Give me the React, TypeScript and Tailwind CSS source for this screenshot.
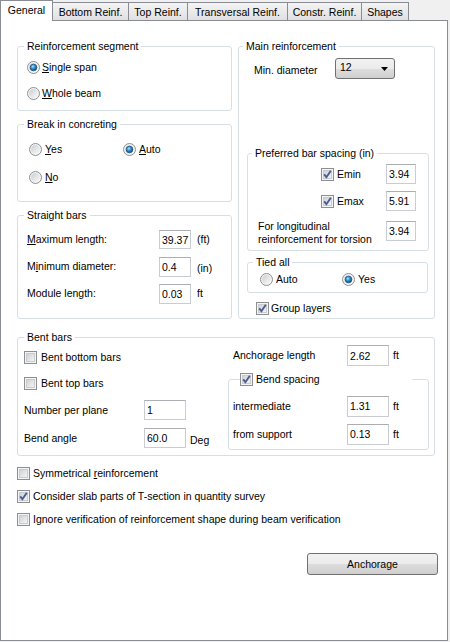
import React from "react";

// Win7-style radio button
function Radio({ checked }: { checked?: boolean }) {
  return (
    <svg width="13" height="13" viewBox="0 0 13 13" className="shrink-0">
      <defs>
        <linearGradient id="rbg" x1="0" y1="0" x2="1" y2="1">
          <stop offset="0" stopColor="#cbcdd0" />
          <stop offset="1" stopColor="#fbfbfb" />
        </linearGradient>
        <radialGradient id="rdot" cx="0.4" cy="0.35" r="0.75">
          <stop offset="0" stopColor="#a6e3fb" />
          <stop offset="0.45" stopColor="#2d8ccb" />
          <stop offset="1" stopColor="#0d3b6a" />
        </radialGradient>
      </defs>
      <circle cx="6.5" cy="6.5" r="6" fill="#f4f4f4" stroke="#8e8f8f" />
      <circle cx="6.5" cy="6.5" r="4.5" fill="url(#rbg)" />
      {checked && (
        <circle cx="6.5" cy="6.5" r="3.3" fill="url(#rdot)" stroke="#1a4f7e" strokeWidth="0.8" />
      )}
    </svg>
  );
}

// Win7-style checkbox
function Check({ checked }: { checked?: boolean }) {
  return (
    <svg width="13" height="13" viewBox="0 0 13 13" className="shrink-0">
      <defs>
        <linearGradient id="cbg" x1="0" y1="0" x2="1" y2="1">
          <stop offset="0" stopColor="#cbcfd5" />
          <stop offset="1" stopColor="#f7f7f7" />
        </linearGradient>
      </defs>
      <rect x="0.5" y="0.5" width="12" height="12" fill="#f4f4f4" stroke="#8e8f8f" />
      <rect x="2.5" y="2.5" width="8" height="8" fill="url(#cbg)" stroke="#c9cbce" />
      {checked && (
        <path d="M3.2 6.4 L5.4 9.2 L9.8 2.8" fill="none" stroke="#4a5c93" strokeWidth="1.9" />
      )}
    </svg>
  );
}

function Group({
  title,
  className,
  legendClass,
  children,
}: {
  title: React.ReactNode;
  className: string;
  legendClass: string;
  children?: React.ReactNode;
}) {
  return (
    <fieldset className={"rounded-[3px] border border-[#d5dfe5] " + className}>
      <legend className={"px-[3px] leading-[13px] " + legendClass}>{title}</legend>
      {children}
    </fieldset>
  );
}

function Field({ value, className }: { value: string; className: string }) {
  return (
    <input
      readOnly
      value={value}
      className={
        "border border-[#c9ccd3] border-t-[#abadb3] bg-white pl-[2px] text-[10.5px] text-black outline-none " +
        className
      }
    />
  );
}

const tabs = [
  { label: "Bottom Reinf.", w: "w-[76px]" },
  { label: "Top Reinf.", w: "w-[59px]" },
  { label: "Transversal Reinf.", w: "w-[100px]" },
  { label: "Constr. Reinf.", w: "w-[74px]" },
  { label: "Shapes", w: "w-[47px]" },
];

export default function App() {
  return (
    <div className="h-[642px] w-[450px] bg-[#f0f0f0] font-['Liberation_Sans',Arial,sans-serif] text-[10.5px] leading-[13px] text-black">
      {/* tab strip */}
      <div className="flex h-[20px] items-end">
        <div className="relative z-10 -mb-px flex h-[21px] w-[53px] justify-center border border-b-0 border-[#898c95] bg-white pt-[3px]">
          General
        </div>
        {tabs.map((t) => (
          <div
            key={t.label}
            className={
              "flex h-[18px] items-center justify-center border border-b-0 border-l-0 border-[#898c95] bg-linear-to-b from-[#f4f4f4] to-[#e0e0e0] pt-px " +
              t.w
            }
          >
            {t.label}
          </div>
        ))}
      </div>

      {/* page */}
      <div className="h-[621px] w-[448px] border border-[#898c95] bg-white pl-[16px] pt-[19px]">
        <div className="flex gap-[6px]">
          {/* left column */}
          <div className="flex w-[215px] flex-col gap-[7px]">
            <Group title="Reinforcement segment" className="h-[71px]" legendClass="ml-[6px]">
              <div className="pl-[9px] pt-px">
                <div className="flex h-[26px] items-center gap-[2px]">
                  <Radio checked />
                  <span>
                    <span className="underline">S</span>ingle span
                  </span>
                </div>
                <div className="flex h-[26px] items-center gap-[2px]">
                  <Radio />
                  <span>
                    <span className="underline">W</span>hole beam
                  </span>
                </div>
              </div>
            </Group>

            <Group title="Break in concreting" className="h-[84px]" legendClass="ml-[6px]">
              <div className="pl-[11px] pt-[4px]">
                <div className="flex h-[28px] items-center">
                  <div className="flex w-[94px] items-center gap-[3px]">
                    <Radio />
                    <span>
                      <span className="underline">Y</span>es
                    </span>
                  </div>
                  <div className="flex items-center gap-[3px]">
                    <Radio checked />
                    <span>
                      <span className="underline">A</span>uto
                    </span>
                  </div>
                </div>
                <div className="flex h-[28px] items-center gap-[3px]">
                  <Radio />
                  <span>
                    <span className="underline">N</span>o
                  </span>
                </div>
              </div>
            </Group>

            <Group title="Straight bars" className="h-[110px]" legendClass="ml-[6px]">
              <div className="pl-[9px] pt-[4px]">
                <div className="flex h-[27px] items-center">
                  <span className="w-[132px]">
                    <span className="underline">M</span>aximum length:
                  </span>
                  <Field value="39.37" className="h-[19px] w-[32px]" />
                  <span className="ml-[6px]">(ft)</span>
                </div>
                <div className="flex h-[27px] items-center">
                  <span className="w-[132px]">
                    M<span className="underline">i</span>nimum diameter:
                  </span>
                  <Field value="0.4" className="h-[20px] w-[32px]" />
                  <span className="ml-[6px] pt-[3px]">(in)</span>
                </div>
                <div className="flex h-[27px] items-center">
                  <span className="w-[132px]">Module length:</span>
                  <Field value="0.03" className="h-[20px] w-[32px]" />
                  <span className="ml-[6px]">ft</span>
                </div>
              </div>
            </Group>
          </div>

          {/* right column */}
          <Group title="Main reinforcement" className="h-[279px] w-[197px]" legendClass="ml-[4px]">
            <div className="flex items-center pl-[15px] pt-[5px]">
              <span className="w-[81px] pt-[3px]">Min. diameter</span>
              <div className="flex h-[21px] w-[60px] items-center justify-between rounded-[3px] border border-[#707070] bg-[linear-gradient(#f2f2f2_0%,#ebebeb_50%,#dddddd_51%,#cfcfcf_100%)] pl-[4px] pr-[6px]">
                <span className="-mt-[3px]">12</span>
                <svg width="7" height="4" viewBox="0 0 7 4">
                  <path d="M0 0 H7 L3.5 4 Z" fill="#000" />
                </svg>
              </div>
            </div>

            <Group
              title="Preferred bar spacing (in)"
              className="ml-[8px] mt-[68px] h-[104px] w-[182px]"
              legendClass="ml-[4px]"
            >
              <div className="pl-[10px] pt-[4px]">
                <div className="flex h-[20px] items-center">
                  <div className="flex w-[128px] items-center gap-[3px] pl-[63px]">
                    <Check checked />
                    <span>Emin</span>
                  </div>
                  <Field value="3.94" className="h-[20px] w-[30px]" />
                </div>
                <div className="mt-[7px] flex h-[20px] items-center">
                  <div className="flex w-[128px] items-center gap-[3px] pl-[63px]">
                    <Check checked />
                    <span>Emax</span>
                  </div>
                  <Field value="5.91" className="h-[20px] w-[30px]" />
                </div>
                <div className="mt-[10px] flex items-start">
                  <span className="-mt-px w-[128px]">
                    For longitudinal
                    <br />
                    reinforcement for torsion
                  </span>
                  <Field value="3.94" className="h-[20px] w-[30px]" />
                </div>
              </div>
            </Group>

            <Group title="Tied all" className="ml-[8px] mt-[5px] h-[37px] w-[181px]" legendClass="ml-[5px]">
              <div className="flex h-[20px] items-center pl-[12px]">
                <div className="flex w-[82px] items-center gap-[3px]">
                  <Radio />
                  <span>Auto</span>
                </div>
                <div className="flex items-center gap-[3px]">
                  <Radio checked />
                  <span>Yes</span>
                </div>
              </div>
            </Group>

            <div className="mt-[7px] flex h-[16px] items-center gap-[2px] pl-[17px]">
              <Check checked />
              <span>Group layers</span>
            </div>
          </Group>
        </div>

        {/* bent bars */}
        <Group title="Bent bars" className="mt-[12px] h-[125px] w-[418px]" legendClass="ml-[6px]">
          <div className="flex">
            <div className="w-[210px] pl-[6px]">
              <div className="flex h-[26px] items-center gap-[4px]">
                <Check />
                <span>Bent bottom bars</span>
              </div>
              <div className="flex h-[26px] items-center gap-[4px]">
                <Check />
                <span>Bent top bars</span>
              </div>
              <div className="flex h-[28px] items-center">
                <span className="w-[120px]">Number per plane</span>
                <Field value="1" className="h-[20px] w-[42px]" />
              </div>
              <div className="flex h-[28px] items-center">
                <span className="w-[120px]">Bend angle</span>
                <Field value="60.0" className="h-[20px] w-[42px]" />
                <span className="ml-[4px] pt-[4px]">Deg</span>
              </div>
            </div>

            <div>
              <div className="flex h-[22px] items-center pl-[5px] pt-px">
                <span className="w-[114px]">Anchorage length</span>
                <Field value="2.62" className="h-[21px] w-[42px]" />
                <span className="ml-[4px]">ft</span>
              </div>
              <Group
                title={
                  <span className="flex items-center gap-[3px]">
                    <Check checked />
                    <span>Bend spacing</span>
                  </span>
                }
                className="mt-[7px] h-[77px] w-[201px]"
                legendClass="ml-[11px] w-[172px] !px-0"
              >
                <div className="pl-[4px] pt-[6px]">
                  <div className="flex h-[28px] items-center">
                    <span className="w-[114px]">intermediate</span>
                    <Field value="1.31" className="h-[21px] w-[42px]" />
                    <span className="ml-[4px]">ft</span>
                  </div>
                  <div className="flex h-[28px] items-center">
                    <span className="w-[114px]">from support</span>
                    <Field value="0.13" className="h-[21px] w-[42px]" />
                    <span className="ml-[4px]">ft</span>
                  </div>
                </div>
              </Group>
            </div>
          </div>
        </Group>

        {/* options */}
        <div className="mt-[6px]">
          <div className="flex h-[23px] items-center gap-[3px]">
            <Check />
            <span>
              Symmetrical <span className="underline">r</span>einforcement
            </span>
          </div>
          <div className="flex h-[23px] items-center gap-[3px]">
            <Check checked />
            <span>Consider slab parts of T-section in quantity survey</span>
          </div>
          <div className="flex h-[23px] items-center gap-[3px]">
            <Check />
            <span>Ignore verification of reinforcement shape during beam verification</span>
          </div>
        </div>

        <button className="ml-[290px] mt-[22px] flex h-[22px] w-[131px] items-center justify-center rounded-[3px] border border-[#707070] bg-[linear-gradient(#f2f2f2_0%,#ebebeb_50%,#dddddd_51%,#cfcfcf_100%)]">
          Anchorage
        </button>
      </div>
    </div>
  );
}
